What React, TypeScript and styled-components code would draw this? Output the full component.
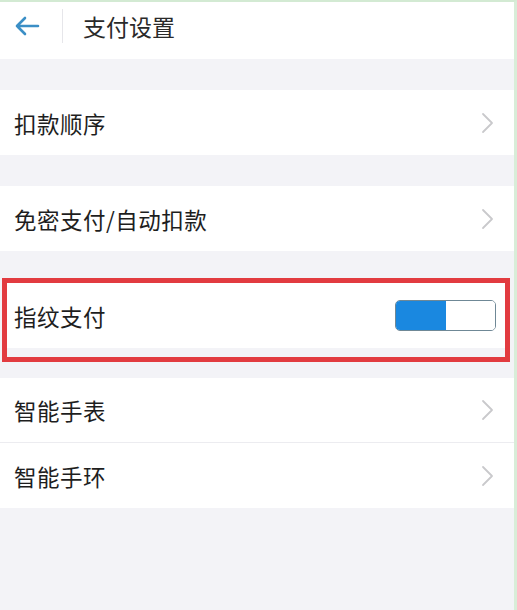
import styled, { createGlobalStyle } from 'styled-components'

const GlobalStyle = createGlobalStyle`
  html, body {
    margin: 0;
    padding: 0;
    background: #f3f3f7;
  }
  * {
    box-sizing: border-box;
  }
`

const FONT = `"Noto Sans CJK SC", "Noto Sans", sans-serif`

const Chevron = () => (
  <svg width="14" height="22" viewBox="0 0 14 22" fill="none">
    <path d="M2 2 L11 11 L2 20" stroke="#c9c9cc" strokeWidth="1.8" strokeLinecap="round" strokeLinejoin="round" />
  </svg>
)

const BackArrow = () => (
  <svg width="26" height="20" viewBox="0 0 26 20" fill="none">
    <path d="M24 10 H3 M11 2 L3 10 L11 18" stroke="#3b8fc6" strokeWidth="2.6" strokeLinecap="round" strokeLinejoin="round" />
  </svg>
)

type RowProps = { label: string; last?: boolean }

const LinkRow = ({ label, last }: RowProps) => (
  <Row $divider={!last}>
    <Label>{label}</Label>
    <Chevron />
  </Row>
)

const App = () => {
  return (
    <Page>
      <GlobalStyle />
      <Header>
        <BackButton>
          <BackArrow />
        </BackButton>
        <HeaderDivider />
        <Title>支付设置</Title>
      </Header>

      <Section $gap={31}>
        <LinkRow label="扣款顺序" last />
      </Section>

      <Section $gap={31}>
        <LinkRow label="免密支付/自动扣款" last />
      </Section>

      <Highlight>
        <ToggleRow>
          <Label>指纹支付</Label>
          <Toggle>
            <ToggleOn />
            <ToggleOff />
          </Toggle>
        </ToggleRow>
      </Highlight>

      <Section $gap={16}>
        <LinkRow label="智能手表" />
        <LinkRow label="智能手环" last />
      </Section>
    </Page>
  )
}

const Page = styled.div`
  min-height: 610px;
  border-top: 2px solid #d3ead3;
  border-right: 3px solid #d8edd8;
  background: #f3f3f7;
  font-family: ${FONT};
`

const Header = styled.div`
  height: 57px;
  padding-bottom: 9px;
  background: #ffffff;
  display: flex;
  align-items: center;
`

const BackButton = styled.div`
  width: 62px;
  padding-left: 14px;
  display: flex;
  align-items: center;
`

const HeaderDivider = styled.div`
  width: 1px;
  height: 34px;
  background: #e6e6ea;
`

const Title = styled.div`
  margin-left: 20px;
  font-size: 23px;
  color: #2a2a2a;
`

const Section = styled.div<{ $gap: number }>`
  margin-top: ${({ $gap }) => $gap}px;
  background: #ffffff;
`

const Row = styled.div<{ $divider: boolean }>`
  height: 65px;
  display: flex;
  align-items: center;
  justify-content: space-between;
  padding: 0 19px 0 14px;
  border-bottom: ${({ $divider }) => ($divider ? '1px solid #ececf0' : 'none')};
`

const Label = styled.span`
  font-size: 22.5px;
  color: #1e1e1e;
  letter-spacing: 0.5px;
`

const Highlight = styled.div`
  margin: 27px 4px 0 2px;
  border: 5px solid #e23b40;
  padding-bottom: 9px;
  background: #f3f3f7;
`

const ToggleRow = styled.div`
  height: 65px;
  background: #ffffff;
  display: flex;
  align-items: center;
  justify-content: space-between;
  padding: 0 9px 0 7px;
`

const Toggle = styled.div`
  width: 101px;
  height: 31px;
  display: flex;
  border: 1.5px solid #6f8896;
  border-radius: 5px;
  overflow: hidden;
`

const ToggleOn = styled.div`
  flex: 1;
  background: #1a88e0;
`

const ToggleOff = styled.div`
  flex: 1;
  background: #ffffff;
`

export default App
